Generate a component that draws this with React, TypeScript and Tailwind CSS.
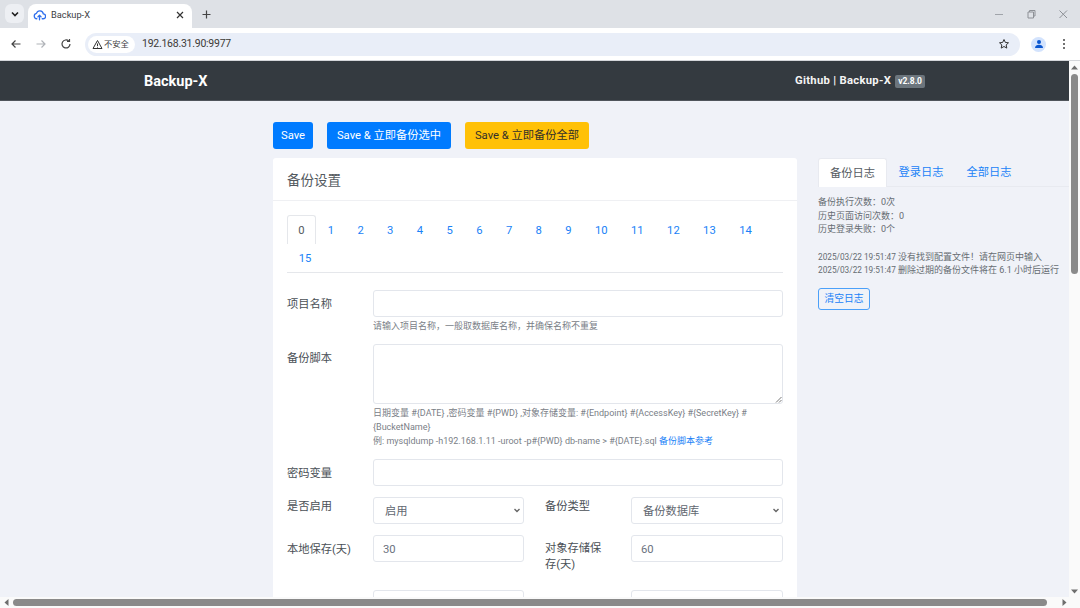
import React from "react";

function Input({ value = "", className = "" }: { value?: string; className?: string }) {
  return (
    <div className={`h-[27px] border border-[#e3e6ec] rounded-[3px] bg-white flex items-center px-[9px] pt-[4px] text-[11.25px] text-[#6b7280] ${className}`}>
      {value}
    </div>
  );
}

function Select({ value, className = "" }: { value: string; className?: string }) {
  return (
    <div className={`h-[27px] border border-[#e3e6ec] rounded-[3px] bg-white flex items-center justify-between pl-[11px] pr-[1px] text-[11.25px] text-[#5f6770] ${className}`}>
      <span className="pt-[4px]">{value}</span>
      <svg width="10" height="10" viewBox="0 0 10 10" fill="none" stroke="#666" strokeWidth="1.4">
        <path d="M2.5 4 L5 6.5 L7.5 4" />
      </svg>
    </div>
  );
}

export default function App() {
  const tabs = ["1", "2", "3", "4", "5", "6", "7", "8", "9", "10", "11", "12", "13", "14", "15"];
  return (
    <div className="w-[1080px] h-[608px] overflow-hidden flex flex-col bg-white font-['Roboto','Noto_Sans_CJK_SC',sans-serif]">
      {/* tab strip */}
      <div className="h-[28px] bg-[#dee1e6] flex items-end pl-[5px] shrink-0">
        <div className="w-[19px] h-[19px] mb-[5px] bg-[#edeff3] rounded-[6px] flex items-center justify-center">
          <svg width="10" height="10" viewBox="0 0 10 10" fill="none" stroke="#1f1f1f" strokeWidth="1.6">
            <path d="M2 3.5 L5 6.5 L8 3.5" />
          </svg>
        </div>
        <div className="w-[164px] h-[24px] ml-[4px] bg-white rounded-t-[8px] flex items-center pl-[5px] pr-[7px] pb-[2px]">
          <svg width="13" height="13" viewBox="0 0 24 24" fill="none" stroke="#2f6fed" strokeWidth="2.4" strokeLinecap="round" strokeLinejoin="round">
            <path d="M7 18a5 5 0 0 1-.6-9.9A6.5 6.5 0 0 1 19 9a4.5 4.5 0 0 1-.5 9h-1.5" />
            <path d="M12 20v-8M9 14.5 12 11.5l3 3" />
          </svg>
          <span className="ml-[5px] text-[9.25px] text-[#3c4043] flex-1">Backup-X</span>
          <svg width="10" height="10" viewBox="0 0 10 10" fill="none" stroke="#333" strokeWidth="1.2">
            <path d="M2 2 L8 8 M8 2 L2 8" />
          </svg>
        </div>
        <svg className="ml-[9px] mb-[8px]" width="11" height="11" viewBox="0 0 11 11" fill="none" stroke="#444" strokeWidth="1.2">
          <path d="M5.5 1.5 V9.5 M1.5 5.5 H9.5" />
        </svg>
        <div className="flex-1" />
        <div className="flex items-center mb-[9px] pr-[12px] gap-[22px]">
          <svg width="10" height="10" viewBox="0 0 10 10" stroke="#a0a4aa" strokeWidth="1" fill="none"><path d="M1 5.5 H9" /></svg>
          <svg width="10" height="10" viewBox="0 0 10 10" stroke="#8d9096" strokeWidth="1" fill="none"><path d="M2 3 H7.5 V9 H2 Z M3.5 3 V1.5 H9 V7 H7.5" /></svg>
          <svg width="10" height="10" viewBox="0 0 10 10" stroke="#8d9096" strokeWidth="1" fill="none"><path d="M1.5 1.5 L9 9 M9 1.5 L1.5 9" /></svg>
        </div>
      </div>
      {/* toolbar */}
      <div className="h-[33px] bg-white flex items-center pl-[10px] border-b border-[#d4d6da] shrink-0">
        <svg width="12" height="12" viewBox="0 0 12 12" fill="none" stroke="#444" strokeWidth="1.2"><path d="M10.5 6 H2 M5.5 2.5 L2 6 L5.5 9.5" /></svg>
        <svg className="ml-[13px]" width="12" height="12" viewBox="0 0 12 12" fill="none" stroke="#b0b3b8" strokeWidth="1.2"><path d="M1.5 6 H10 M6.5 2.5 L10 6 L6.5 9.5" /></svg>
        <svg className="ml-[13px]" width="12" height="12" viewBox="0 0 12 12" fill="none" stroke="#444" strokeWidth="1.2"><path d="M10 6a4 4 0 1 1-1.2-2.9 M9.5 1 V3.5 H7" /></svg>
        <div className="ml-[13px] w-[935px] shrink-0 h-[23px] bg-[#e9eef8] rounded-full flex items-center pl-[3px] pr-[10px]">
          <div className="h-[17px] w-[47px] bg-white rounded-full flex items-center pl-[4px]">
            <svg width="11" height="11" viewBox="0 0 11 11" fill="none" stroke="#333" strokeWidth="1"><path d="M5.5 1.5 L10 9.5 H1 Z M5.5 4.5 V7 M5.5 7.8 V8.6" /></svg>
            <span className="ml-[1px] text-[8.25px] text-[#3c4043] whitespace-nowrap">不安全</span>
          </div>
          <span className="ml-[7px] text-[10.5px] tracking-[-0.25px] text-[#3c3a36]">192.168.31.90:9977</span>
          <div className="flex-1" />
          <svg width="12" height="12" viewBox="0 0 24 24" fill="none" stroke="#333" strokeWidth="2"><path d="M12 3l2.7 5.9 6.3.7-4.7 4.3 1.3 6.3L12 17l-5.6 3.2 1.3-6.3L3 9.6l6.3-.7z" /></svg>
        </div>
        <div className="ml-[11px] w-[15px] h-[15px] rounded-full bg-[#d3e3fd] flex items-center justify-center">
          <svg width="10" height="10" viewBox="0 0 10 10" fill="#0b57d0"><circle cx="5" cy="3" r="2" /><path d="M1 9 C1 6.5 3 5.8 5 5.8 S9 6.5 9 9 Z" /></svg>
        </div>
        <svg className="ml-[16px]" width="4" height="12" viewBox="0 0 4 12" fill="#444"><circle cx="2" cy="2" r="1" /><circle cx="2" cy="6" r="1" /><circle cx="2" cy="10" r="1" /></svg>
      </div>
      {/* viewport */}
      <div className="flex-1 min-h-0 flex">
        <div className="flex-1 min-w-0 bg-[#f0f2f8] overflow-hidden">
          <div className="h-[40px] bg-[#343a40] flex items-center justify-between px-[144px] pt-[2px] border-b border-[#50555b]">
            <span className="text-[14.5px] font-bold text-white">Backup-X</span>
            <div className="flex items-center">
              <span className="text-[11.25px] font-bold tracking-[0.3px] text-[#f4f4f4]">Github | Backup-X</span>
              <span className="ml-[4px] h-[13px] px-[3px] rounded-[2px] bg-[#6c757d] text-white text-[8.5px] font-bold leading-[13px]">v2.8.0</span>
            </div>
          </div>
          <div className="pl-[273px] pt-[21px]">
            <div className="flex gap-[14px] h-[27px]">
              <div className="w-[40px] pt-[2px] bg-[#007bff] rounded-[3px] text-white text-[11.25px] flex items-center justify-center">Save</div>
              <div className="w-[124px] pt-[2px] bg-[#007bff] rounded-[3px] text-white text-[11.25px] flex items-center justify-center whitespace-nowrap">Save &amp; 立即备份选中</div>
              <div className="w-[124px] pt-[2px] bg-[#ffc107] rounded-[3px] text-[#33302a] text-[11.25px] flex items-center justify-center whitespace-nowrap">Save &amp; 立即备份全部</div>
            </div>
            <div className="flex mt-[9px] items-start">
              {/* card */}
              <div className="w-[524px] h-[500px] shrink-0 bg-white rounded-[3px]">
                <div className="h-[43px] border-b border-[#eff0f3] pl-[14px] pt-[3px] flex items-center text-[13.5px] text-[#545a60]">备份设置</div>
                <div className="px-[14px] pt-[14px]">
                  <div className="flex flex-wrap border-b border-[#e5e7eb] text-[11.25px]">
                    <div className="h-[28.5px] w-[29px] pt-[4px] flex items-center justify-center bg-white border border-b-0 border-[#e5e7eb] rounded-t-[3px] text-[#555b61]">0</div>
                    {tabs.map((t) => (
                      <div key={t} className="h-[28.5px] px-[11.7px] pt-[4px] flex items-center text-[#1a82f7]">{t}</div>
                    ))}
                  </div>
                  <div className="mt-[17px] flex">
                    <div className="w-[86px] shrink-0 text-[11.25px] leading-[17px] pt-[6px] text-[#4a5056]">项目名称</div>
                    <div className="flex-1 min-w-0">
                      <Input />
                      <div className="mt-[3px] text-[9px] leading-[13.5px] text-[#7a8087]">请输入项目名称，一般取数据库名称，并确保名称不重复</div>
                    </div>
                  </div>
                  <div className="mt-[10px] flex">
                    <div className="w-[86px] shrink-0 text-[11.25px] leading-[17px] pt-[6px] text-[#4a5056]">备份脚本</div>
                    <div className="flex-1 min-w-0">
                      <div className="h-[60px] border border-[#e3e6ec] rounded-[3px] bg-white flex items-end justify-end">
                        <svg width="7" height="7" viewBox="0 0 7 7" stroke="#555" strokeWidth="0.8" fill="none"><path d="M1 6.5 L6.5 1 M4 6.5 L6.5 4" /></svg>
                      </div>
                      <div className="mt-[2.5px] text-[9px] leading-[14px] text-[#7a8087]">
                        日期变量 #{"{DATE}"} ,密码变量 #{"{PWD}"} ,对象存储变量: #{"{Endpoint}"} #{"{AccessKey}"} #{"{SecretKey}"} #{"{BucketName}"}
                        <br />
                        例: mysqldump -h192.168.1.11 -uroot -p#{"{PWD}"} db-name &gt; #{"{DATE}"}.sql <span className="text-[#1a82f7]">备份脚本参考</span>
                      </div>
                    </div>
                  </div>
                  <div className="mt-[10.5px] flex">
                    <div className="w-[86px] shrink-0 text-[11.25px] leading-[17px] pt-[6px] text-[#4a5056]">密码变量</div>
                    <Input className="flex-1" />
                  </div>
                  <div className="mt-[11px] flex">
                    <div className="w-[86px] shrink-0 text-[11.25px] leading-[17px] pt-[1px] text-[#4a5056]">是否启用</div>
                    <Select value="启用" className="w-[151px]" />
                    <div className="w-[86px] ml-[21px] shrink-0 text-[11.25px] leading-[17px] pt-[1px] text-[#4a5056]">备份类型</div>
                    <Select value="备份数据库" className="flex-1" />
                  </div>
                  <div className="mt-[11px] flex">
                    <div className="w-[86px] shrink-0 text-[11.25px] leading-[17px] pt-[6px] text-[#4a5056]">本地保存(天)</div>
                    <Input value="30" className="w-[151px]" />
                    <div className="w-[86px] ml-[21px] shrink-0 text-[11.25px] leading-[16px] pt-[6px] text-[#4a5056]">对象存储保<br />存(天)</div>
                    <Input value="60" className="flex-1" />
                  </div>
                  <div className="mt-[17px] flex">
                    <div className="w-[86px] shrink-0" />
                    <Input className="w-[151px]" />
                    <div className="w-[86px] ml-[21px] shrink-0" />
                    <Input className="flex-1" />
                  </div>
                </div>
              </div>
              {/* log */}
              <div className="ml-[21px] flex-1 min-w-0">
                <div className="flex h-[29px] border-b border-[#e8eaf0] text-[11.25px]">
                  <div className="h-[29px] w-[69px] pt-[2px] bg-white border border-b-0 border-[#e8eaf0] rounded-t-[3px] flex items-center justify-center text-[#555b61]">备份日志</div>
                  <div className="px-[11.5px] pt-[2px] flex items-center text-[#1a82f7]">登录日志</div>
                  <div className="px-[11.5px] pt-[2px] flex items-center text-[#1a82f7]">全部日志</div>
                </div>
                <div className="mt-[9px] text-[9px] leading-[13.5px] text-[#666c72]">
                  <div>备份执行次数：0次</div>
                  <div>历史页面访问次数：0</div>
                  <div>历史登录失败：0个</div>
                  <div className="mt-[14px] whitespace-nowrap"><span className="text-[8.25px]">2025/03/22 19:51:47</span> 没有找到配置文件！请在网页中输入</div>
                  <div className="whitespace-nowrap"><span className="text-[8.25px]">2025/03/22 19:51:47</span> 删除过期的备份文件将在 6.1 小时后运行</div>
                </div>
                <div className="mt-[10px] w-[52px] h-[22px] pt-[2px] border border-[#4ba0f9] rounded-[3px] text-[#1a82f7] text-[9.75px] flex items-center justify-center">清空日志</div>
              </div>
            </div>
          </div>
        </div>
        {/* vertical scrollbar */}
        <div className="w-[11px] shrink-0 bg-[#fafafa] flex flex-col items-center pt-[4px] pb-[3px]">
          <svg width="7" height="5" viewBox="0 0 7 5" fill="#6e6e6e"><path d="M3.5 0.5 L7 4.5 H0 Z" /></svg>
          <div className="mt-[4px] w-[7px] h-[200px] rounded-full bg-[#8a8a8a]" />
          <div className="flex-1" />
          <svg width="7" height="5" viewBox="0 0 7 5" fill="#6e6e6e"><path d="M0 0.5 H7 L3.5 4.5 Z" /></svg>
        </div>
      </div>
      {/* horizontal scrollbar */}
      <div className="h-[11px] shrink-0 bg-[#fafafa] flex items-center pl-[4px]">
        <svg width="5" height="7" viewBox="0 0 5 7" fill="#6e6e6e"><path d="M4.5 0 V7 L0.5 3.5 Z" /></svg>
        <div className="ml-[4px] w-[1034px] h-[7px] rounded-full bg-[#8a8a8a]" />
        <svg className="ml-[15px]" width="5" height="7" viewBox="0 0 5 7" fill="#6e6e6e"><path d="M0.5 0 V7 L4.5 3.5 Z" /></svg>
      </div>
    </div>
  );
}
